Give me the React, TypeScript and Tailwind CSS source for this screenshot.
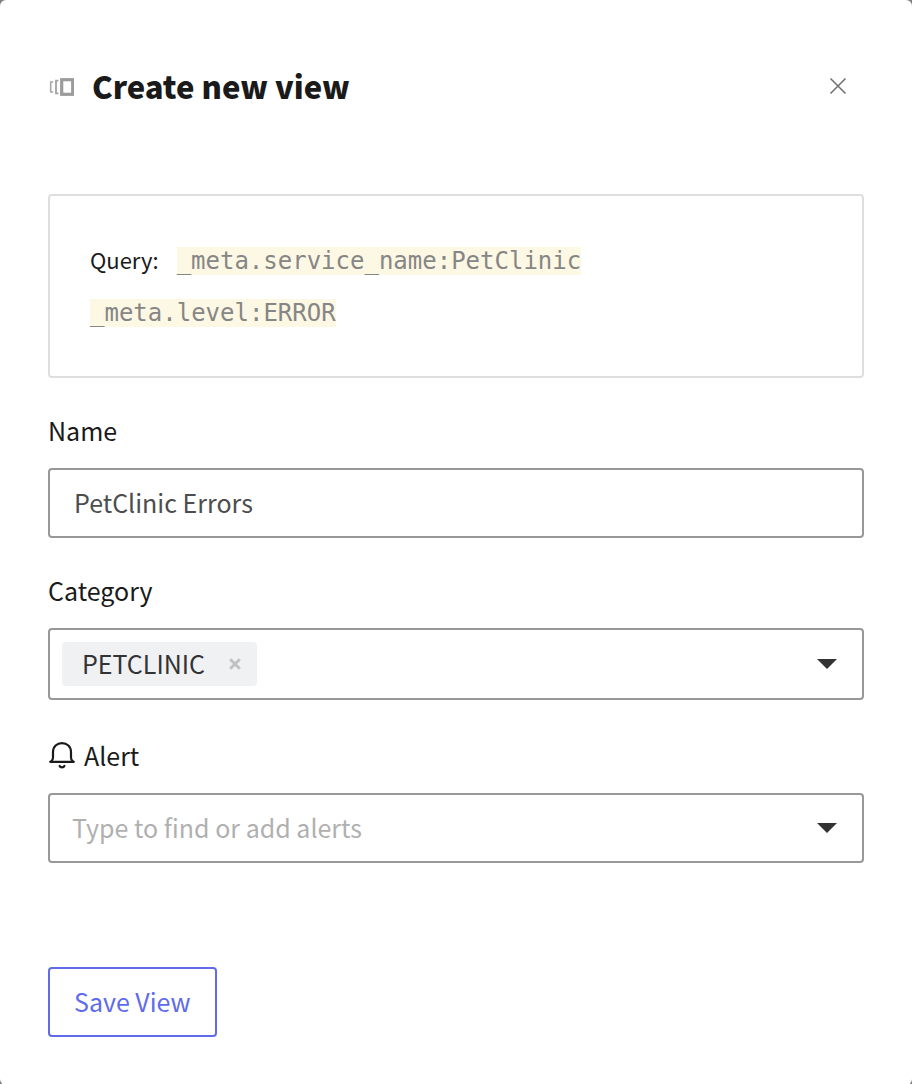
import { useState } from "react";

function ViewIcon() {
  return (
    <svg width="26" height="22" viewBox="0 0 26 22" fill="none" aria-hidden="true" className="shrink-0">
      <path d="M5.2 7H2.7V17H5.2" stroke="#a8a8a8" strokeWidth="1.6" />
      <path d="M10.4 5.7H8V18.3H10.4" stroke="#a2a2a2" strokeWidth="1.8" />
      <rect x="13.7" y="4.7" width="11" height="14.6" stroke="#9c9c9c" strokeWidth="3.2" />
    </svg>
  );
}

function CloseIcon() {
  return (
    <svg width="18" height="18" viewBox="0 0 18 18" fill="none" aria-hidden="true">
      <path d="M1.5 1.5L16.5 16.5M16.5 1.5L1.5 16.5" stroke="#6e6e6e" strokeWidth="1.5" />
    </svg>
  );
}

function BellIcon() {
  return (
    <svg width="28" height="28" viewBox="0 0 28 28" fill="none" stroke="#1a1a1a" strokeWidth="2.2" strokeLinecap="round" aria-hidden="true" className="shrink-0">
      <path d="M2.2 20.8H25.8" />
      <path d="M3 20.5C4.6 19.6 5 18.4 5 16.6V11C5 5.5 9 2.2 14 2.2C19 2.2 23 5.5 23 11V16.6C23 18.4 23.4 19.6 25 20.5" />
      <path d="M11.6 25C12.4 26.7 15.6 26.7 16.4 25" />
    </svg>
  );
}

function Caret() {
  return (
    <svg width="20" height="10" viewBox="0 0 20 10" aria-hidden="true">
      <path d="M0 0H20L10 10Z" fill="#333333" />
    </svg>
  );
}

function TagRemoveIcon() {
  return (
    <svg width="12" height="12" viewBox="0 0 12 12" aria-hidden="true">
      <path d="M1.2 1.2L10.8 10.8M10.8 1.2L1.2 10.8" stroke="#bfc1c3" strokeWidth="3" />
    </svg>
  );
}

export default function App() {
  const [name, setName] = useState("PetClinic Errors");
  const [tags, setTags] = useState(["PETCLINIC"]);

  return (
    <div className="min-h-screen bg-[#808080] font-['Noto_Sans_CJK_SC','Noto_Sans',sans-serif] text-[25px] text-[#1a1a1a]">
      <main role="dialog" aria-labelledby="title" className="flex min-h-screen flex-col rounded-md bg-white px-12 pt-[62px] pb-12">
        <header className="flex h-12 items-center">
          <ViewIcon />
          <h1 id="title" className="ml-[18px] flex-1 text-[31px] leading-[46px] font-black">
            Create new view
          </h1>
          <button type="button" aria-label="Close" className="mr-[17px]">
            <CloseIcon />
          </button>
        </header>

        <section className="mt-[84px] rounded-sm border-2 border-[#dedede] px-10 py-[38px] text-[22px] leading-[50px]">
          <span className="mr-[18px]">Query:</span>
          <code className="bg-[#fdf8e4] font-['DejaVu_Sans_Mono',monospace] text-2xl leading-[50px] text-[#868686]">
            _meta.service_name:PetClinic _meta.level:ERROR
          </code>
        </section>

        <form className="flex flex-col" onSubmit={(e) => e.preventDefault()}>
          <label htmlFor="name" className="mt-[34px] leading-9">
            Name
          </label>
          <input
            id="name"
            value={name}
            onChange={(e) => setName(e.target.value)}
            className="mt-5 h-[70px] w-full rounded-sm border-2 border-[#989898] px-6 pb-0.5 text-[#4d4d4d]"
          />

          <label htmlFor="category" className="mt-[34px] leading-9">
            Category
          </label>
          <div className="mt-5 flex h-[72px] items-center rounded-sm border-2 border-[#989898] pr-[25px] pl-3">
            {tags.map((tag) => (
              <span key={tag} className="flex h-11 items-center gap-6 rounded-sm bg-[#f0f1f3] pr-4 pl-5 text-[#333333]">
                {tag}
                <button type="button" aria-label={"Remove " + tag} onClick={() => setTags(tags.filter((t) => t !== tag))}>
                  <TagRemoveIcon />
                </button>
              </span>
            ))}
            <input id="category" className="h-11 min-w-0 flex-1 px-2 outline-none" />
            <button type="button" aria-label="Show categories">
              <Caret />
            </button>
          </div>

          <label htmlFor="alert" className="mt-[37px] flex items-center gap-2 leading-9">
            <BellIcon />
            Alert
          </label>
          <div className="mt-5 flex h-[70px] items-center rounded-sm border-2 border-[#989898] pr-[25px] pl-[22px]">
            <input
              id="alert"
              placeholder="Type to find or add alerts"
              className="h-11 min-w-0 flex-1 pb-0.5 outline-none placeholder:text-[#b0b0b0]"
            />
            <button type="button" aria-label="Show alerts">
              <Caret />
            </button>
          </div>

          <button type="submit" className="mt-[104px] h-[70px] self-start rounded-sm border-2 border-[#5f6bea] px-6 text-[#5f6bea]">
            Save View
          </button>
        </form>
      </main>
    </div>
  );
}
